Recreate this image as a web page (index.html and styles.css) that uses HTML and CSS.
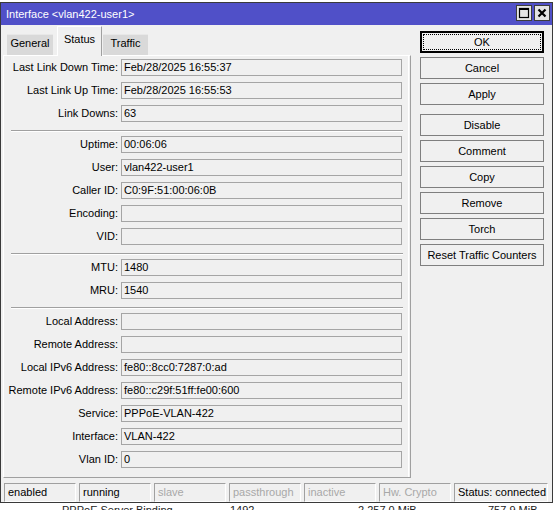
FILE: index.html
```html
<!DOCTYPE html>
<html>
<head>
<meta charset="utf-8">
<link rel="stylesheet" href="styles.css">
</head>
<body>
<div class="window">
  <div class="titlebar">
    <span class="title">Interface &lt;vlan422-user1&gt;</span>
    <div class="tb-btns">
      <div class="tb-btn"><svg width="14" height="14" viewBox="0 0 14 14"><rect x="2.5" y="2.5" width="9" height="9" fill="none" stroke="#000" stroke-width="1.2"/><rect x="2" y="2" width="10" height="2" fill="#000"/></svg></div>
      <div class="tb-btn"><svg width="14" height="14" viewBox="0 0 14 14"><path d="M3.5 3.5 L10.5 10.5 M10.5 3.5 L3.5 10.5" stroke="#000" stroke-width="2.2" fill="none"/></svg></div>
    </div>
  </div>
  <div class="main">
    <div class="left">
      <div class="tabs">
        <div class="tab t-general">General</div>
        <div class="tab t-status active">Status</div>
        <div class="tab t-traffic">Traffic</div>
      </div>
      <div class="panel">
        <div class="row"><div class="label">Last Link Down Time:</div><div class="field">Feb/28/2025 16:55:37</div></div>
        <div class="row"><div class="label">Last Link Up Time:</div><div class="field">Feb/28/2025 16:55:53</div></div>
        <div class="row"><div class="label">Link Downs:</div><div class="field">63</div></div>
        <div class="sep"></div>
        <div class="row"><div class="label">Uptime:</div><div class="field">00:06:06</div></div>
        <div class="row"><div class="label">User:</div><div class="field">vlan422-user1</div></div>
        <div class="row"><div class="label">Caller ID:</div><div class="field">C0:9F:51:00:06:0B</div></div>
        <div class="row"><div class="label">Encoding:</div><div class="field"></div></div>
        <div class="row"><div class="label">VID:</div><div class="field"></div></div>
        <div class="sep"></div>
        <div class="row"><div class="label">MTU:</div><div class="field">1480</div></div>
        <div class="row"><div class="label">MRU:</div><div class="field">1540</div></div>
        <div class="sep"></div>
        <div class="row"><div class="label">Local Address:</div><div class="field"></div></div>
        <div class="row"><div class="label">Remote Address:</div><div class="field"></div></div>
        <div class="row"><div class="label">Local IPv6 Address:</div><div class="field">fe80::8cc0:7287:0:ad</div></div>
        <div class="row"><div class="label">Remote IPv6 Address:</div><div class="field">fe80::c29f:51ff:fe00:600</div></div>
        <div class="row"><div class="label">Service:</div><div class="field">PPPoE-VLAN-422</div></div>
        <div class="row"><div class="label">Interface:</div><div class="field">VLAN-422</div></div>
        <div class="row"><div class="label">Vlan ID:</div><div class="field">0</div></div>
      </div>
    </div>
    <div class="buttons">
      <div class="btn default">OK</div>
      <div class="btn">Cancel</div>
      <div class="btn">Apply</div>
      <div class="btn group">Disable</div>
      <div class="btn">Comment</div>
      <div class="btn">Copy</div>
      <div class="btn">Remove</div>
      <div class="btn">Torch</div>
      <div class="btn">Reset Traffic Counters</div>
    </div>
  </div>
  <div class="statusbar">
    <div class="cell">enabled</div>
    <div class="cell">running</div>
    <div class="cell dim">slave</div>
    <div class="cell dim">passthrough</div>
    <div class="cell dim">inactive</div>
    <div class="cell dim">Hw. Crypto</div>
    <div class="cell last">Status: connected</div>
  </div>
</div>
<div class="behind">
  <span class="b1">PPPoE Server Binding</span>
  <span class="b2">1492</span>
  <span class="b3">2 257.0 MiB</span>
  <span class="b4">757.9 MiB</span>
</div>
</body>
</html>
```

FILE: styles.css
```css
* { box-sizing: border-box; }
body {
  margin: 0;
  background: #fff;
  font-family: "Liberation Sans", Arial, sans-serif;
  font-size: 11px;
  color: #000;
}
.window {
  margin-top: 2px;
  width: 553px;
  height: 501px;
  border: 1px solid #3a3a3a;
  background: #f0f0f0;
  display: flex;
  flex-direction: column;
}
.titlebar {
  height: 22px;
  flex: none;
  background: #5050c8;
  display: flex;
  align-items: center;
  padding-left: 5px;
  color: #fff;
}
.title { flex: 1; font-size: 11px; }
.tb-btns {
  display: flex;
  gap: 2px;
  margin-right: 2px;
  align-self: flex-start;
  margin-top: 2px;
}
.tb-btn {
  width: 16px;
  height: 16px;
  background: #e4e4e4;
  border: 1px solid #3c3c3c;
  display: flex;
  align-items: center;
  justify-content: center;
}
.main {
  display: flex;
  flex: none;
  height: 453px;
}
.left {
  margin-left: 2px;
  width: 408px;
}
.tabs {
  height: 29px;
  margin-top: 1px;
  display: flex;
  align-items: flex-end;
  padding-left: 4px;
}
.tab {
  height: 21px;
  background: #d9d9d9;
  border-top: 1px solid #e8e8e8;
  text-align: center;
  line-height: 17px;
}
.t-general { width: 46px; margin-right: 4px; }
.t-status { width: 45px; }
.t-traffic { width: 45px; margin-left: 1px; }
.tab.active {
  height: 30px;
  margin-bottom: -1px;
  background: #f0f0f0;
  border: 1px solid #fff;
  border-bottom: none;
  border-right-color: #a0a0a0;
  line-height: 24px;
  position: relative;
  z-index: 1;
}
.panel {
  height: 423px;
  border: 1px solid;
  border-color: #fff #a0a0a0 #a0a0a0 #fff;
  box-shadow: inset -1px 0 0 #f0f0f0, inset -2px 0 0 #fff;
  padding-top: 3px;
  display: flex;
  flex-direction: column;
}
.row {
  display: grid;
  grid-template-columns: 114px 281px;
  column-gap: 3px;
  height: 17px;
  flex: none;
  margin-bottom: 6px;
}
.label {
  text-align: right;
  line-height: 17px;
  white-space: nowrap;
}
.field {
  border: 1px solid #a5a5a5;
  height: 17px;
  line-height: 15px;
  padding-left: 2px;
  white-space: nowrap;
}
.sep {
  flex: none;
  margin: 2px 7px 4px 7px;
  border-top: 1px solid #a0a0a0;
  border-bottom: 1px solid #fff;
}
.buttons {
  display: flex;
  flex-direction: column;
  gap: 4px;
  margin-top: 6px;
  margin-left: 9px;
  width: 124px;
}
.btn {
  height: 22px;
  border: 1px solid #7f7f7f;
  display: flex;
  align-items: center;
  justify-content: center;
  position: relative;
}
.btn.group { margin-top: 5px; }
.btn.default {
  border: 2px solid #000;
}
.btn.default::after {
  content: "";
  position: absolute;
  left: 1px;
  top: 1px;
  right: 1px;
  bottom: 1px;
  border: 1px dotted #000;
}
.statusbar {
  display: flex;
  gap: 3px;
  margin-top: 5px;
  height: 19px;
  padding-left: 3px;
  flex: none;
}
.cell {
  width: 72px;
  border: 1px solid;
  border-color: #a0a0a0 #fff #fff #a0a0a0;
  padding-left: 3px;
  line-height: 17px;
  white-space: nowrap;
}
.cell.last { width: 94px; }
.dim { color: #a8a8a8; }
.behind {
  height: 7px;
  overflow: hidden;
  display: flex;
  line-height: 14px;
  color: #222;
}
.b1 { margin-left: 62px; width: 168px; }
.b2 { width: 128px; }
.b3 { width: 130px; }
```
